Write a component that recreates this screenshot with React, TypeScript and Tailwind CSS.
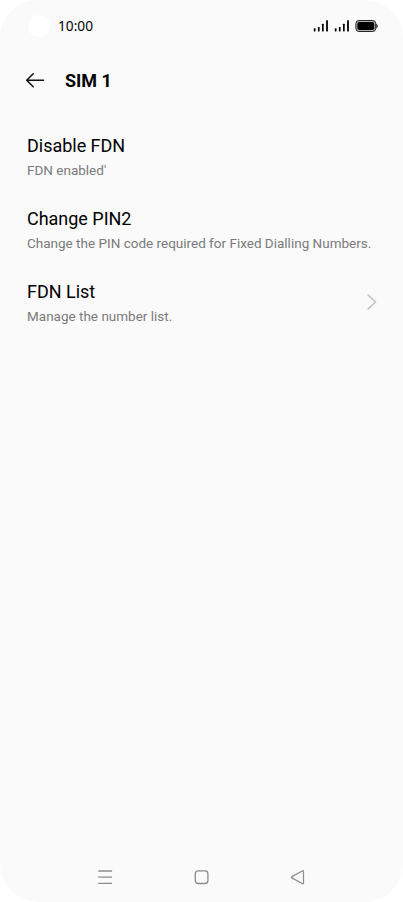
const items = [
  { title: "Disable FDN", text: "FDN enabled'" },
  { title: "Change PIN2", text: "Change the PIN code required for Fixed Dialling Numbers." },
  { title: "FDN List", text: "Manage the number list.", arrow: true },
];

function Signal() {
  return (
    <svg width="15" height="12" viewBox="0 0 15 12" fill="#000">
      <rect x="0.8" y="8.3" width="1.7" height="3.2" rx="0.4" />
      <rect x="4.9" y="7" width="1.7" height="4.5" rx="0.4" />
      <rect x="9" y="3.8" width="1.7" height="7.7" rx="0.4" />
      <rect x="13.1" y="0.2" width="1.8" height="11.3" rx="0.4" />
    </svg>
  );
}

function Battery() {
  return (
    <svg width="23" height="12" viewBox="0 0 23 12">
      <rect x="0.9" y="0.5" width="19.8" height="11" rx="3" fill="#b5b5b5" stroke="#222" strokeWidth="1" />
      <rect x="2.4" y="2" width="16.8" height="8" rx="1.8" fill="#000" />
      <path d="M21.3 3.7c.8.3 1.4 1.3 1.4 2.3s-.6 2-1.4 2.3z" fill="#111" />
    </svg>
  );
}

export default function App() {
  return (
    <div className="h-[902px] w-[403px] bg-white">
      <main className="flex h-full flex-col overflow-hidden rounded-[38px] bg-[#fafafa] font-['Roboto',sans-serif] text-black">
        <header className="flex h-[52px] shrink-0 items-center pl-7 pr-[25px]">
          <div className="size-[22px] rounded-full bg-white" />
          <span className="ml-2 font-['Noto_Sans',sans-serif] text-[13.7px] leading-5">10:00</span>
          <div className="ml-auto flex items-center">
            <Signal />
            <div className="w-1.5" />
            <Signal />
            <div className="w-1.5" />
            <Battery />
          </div>
        </header>

        <div className="flex h-14 shrink-0 items-center pl-[25px]">
          <svg width="20" height="16" viewBox="0 0 20 16" fill="none" stroke="#111" strokeWidth="1.5" strokeLinecap="round" strokeLinejoin="round">
            <path d="M18.5 8.3H1.7M8.2 1.8L1.7 8.3 8.2 14.8" />
          </svg>
          <h1 className="ml-5 pt-0.5 text-[18px] font-bold leading-6">SIM 1</h1>
        </div>

        <ul className="mt-[26px] flex flex-col">
          {items.map((item) => (
            <li key={item.title} className="flex h-[73px] items-start pl-[27px] pr-[26px]">
              <div>
                <h2 className="text-[18px] leading-6 tracking-[-0.02px]">{item.title}</h2>
                <p className="mt-0.5 whitespace-nowrap text-[13.5px] leading-5 text-[#7a7a7a]">{item.text}</p>
              </div>
              {item.arrow && (
                <svg className="ml-auto mt-[14px]" width="10" height="16" viewBox="0 0 10 16" fill="none" stroke="#c4c4c4" strokeWidth="1.6" strokeLinecap="round" strokeLinejoin="round">
                  <path d="M1.2 1.1L8.6 8 1.2 14.9" />
                </svg>
              )}
            </li>
          ))}
        </ul>

        <nav className="mt-auto flex h-[50px] items-center justify-between px-[98px]">
          <svg width="15" height="16" viewBox="0 0 15 16" stroke="#8c8c8c" strokeWidth="1.3">
            <path d="M0.3 2h13.8M0.3 8.2h13.8M0.3 14.4h13.8" />
          </svg>
          <svg width="16" height="16" viewBox="0 0 16 16" fill="none" stroke="#8c8c8c" strokeWidth="1.3">
            <rect x="1.3" y="1.9" width="12.6" height="12.6" rx="2.8" />
          </svg>
          <svg width="15" height="16" viewBox="0 0 15 16" fill="none" stroke="#8c8c8c" strokeWidth="1.2" strokeLinejoin="round">
            <path d="M13.5 2.2v12c0 .5-.4.7-.8.5L1.8 8.9c-.5-.3-.5-1 0-1.3l10.9-5.9c.4-.2.8 0 .8.5z" />
          </svg>
        </nav>
      </main>
    </div>
  );
}
